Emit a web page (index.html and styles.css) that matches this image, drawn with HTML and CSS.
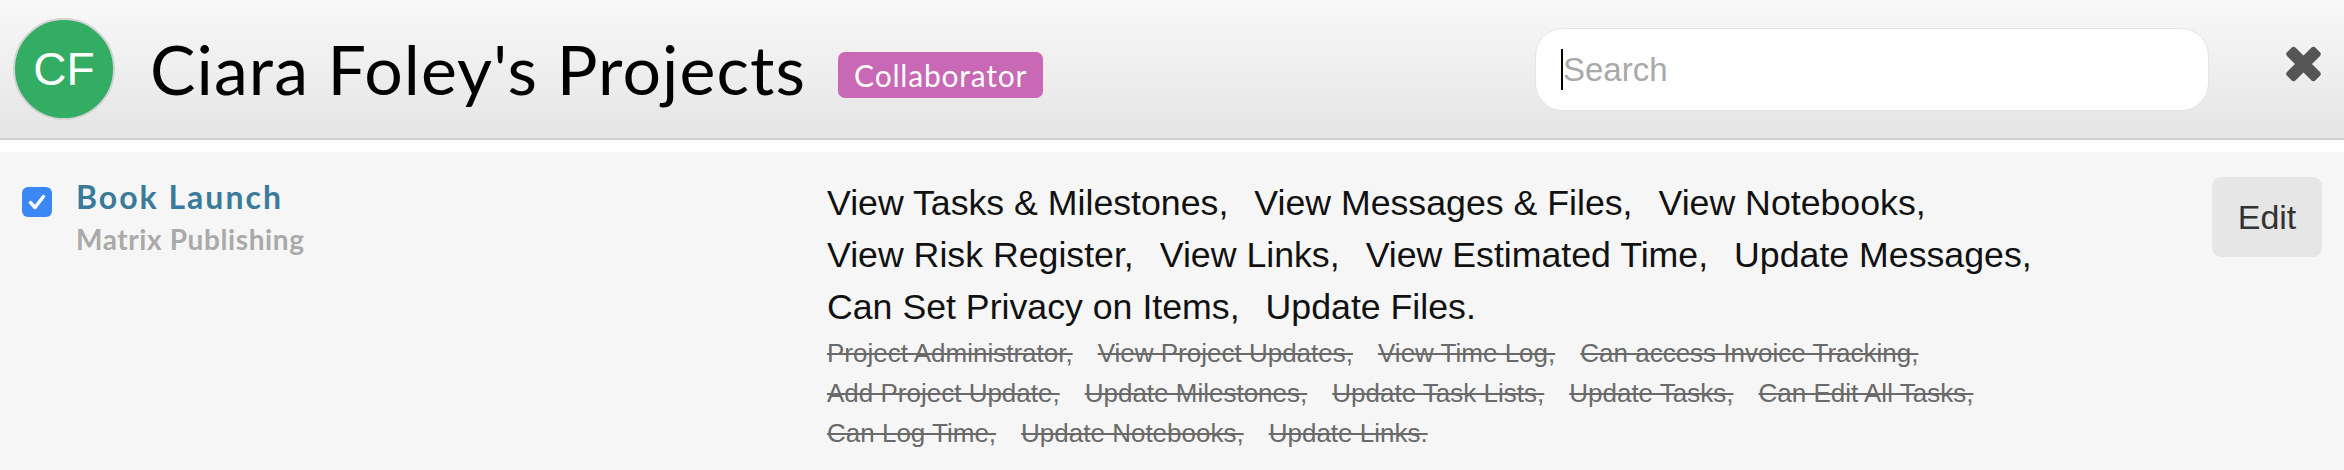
FILE: index.html
```html
<!DOCTYPE html>
<html lang="en">
<head>
<meta charset="utf-8">
<title>Ciara Foley's Projects</title>
<link rel="stylesheet" href="styles.css">
</head>
<body>
<header class="header">
  <div class="avatar">CF</div>
  <h1 class="title">Ciara Foley's Projects</h1>
  <span class="badge">Collaborator</span>
  <div class="search">
    <span class="caret"></span>
    <input class="search-input" type="text" placeholder="Search">
  </div>
  <button class="close" aria-label="Close">
    <svg viewBox="0 0 37 36" width="37" height="36">
      <g fill="#555" transform="translate(18.5 18)">
        <rect x="-20" y="-6" width="40" height="12" rx="3" transform="rotate(45)"/>
        <rect x="-20" y="-6" width="40" height="12" rx="3" transform="rotate(-45)"/>
      </g>
    </svg>
  </button>
</header>

<main class="list">
  <div class="row">
    <div class="project">
      <span class="checkbox">
        <svg viewBox="0 0 30 30" width="30" height="30">
          <path d="M8.5 15.5 L13 20.5 L21.5 9.5" fill="none" stroke="#fff" stroke-width="3.4" stroke-linecap="round" stroke-linejoin="round"/>
        </svg>
      </span>
      <div class="project-text">
        <div class="project-name">Book Launch</div>
        <div class="project-company">Matrix Publishing</div>
      </div>
    </div>
    <div class="perms">
      <div class="perm-list granted">
        <span>View Tasks &amp; Milestones,</span>
        <span>View Messages &amp; Files,</span>
        <span>View Notebooks,</span>
        <span>View Risk Register,</span>
        <span>View Links,</span>
        <span>View Estimated Time,</span>
        <span>Update Messages,</span>
        <span>Can Set Privacy on Items,</span>
        <span>Update Files.</span>
      </div>
      <div class="perm-list denied">
        <span>Project Administrator,</span>
        <span>View Project Updates,</span>
        <span>View Time Log,</span>
        <span>Can access Invoice Tracking,</span>
        <span>Add Project Update,</span>
        <span>Update Milestones,</span>
        <span>Update Task Lists,</span>
        <span>Update Tasks,</span>
        <span>Can Edit All Tasks,</span>
        <span>Can Log Time,</span>
        <span>Update Notebooks,</span>
        <span>Update Links.</span>
      </div>
    </div>
    <button class="edit">Edit</button>
  </div>
</main>
</body>
</html>
```

FILE: styles.css
```css
html, body {
  margin: 0;
  padding: 0;
  overflow: hidden;
  background: #ffffff;
}

body {
  font-family: "Liberation Sans", Arial, sans-serif;
  color: #111;
}

.header {
  display: flex;
  align-items: center;
  height: 138px;
  padding: 0 22px 0 13px;
  background: linear-gradient(#f8f8f8, #e5e5e5);
  border-bottom: 2px solid #cfcfcf;
}

.avatar {
  width: 102px;
  height: 102px;
  box-sizing: border-box;
  border-radius: 50%;
  border: 2px solid #d2d2d2;
  background: #33ad64;
  color: #fff;
  font-family: "Liberation Sans", Arial, sans-serif;
  font-size: 46px;
  display: flex;
  align-items: center;
  justify-content: center;
  flex: none;
}

.title {
  margin: 0 0 0 35px;
  font-family: Lato, "Open Sans", sans-serif;
  font-weight: 400;
  font-size: 68px;
  letter-spacing: 1.1px;
  color: #000;
  line-height: 1;
  white-space: nowrap;
}

.badge {
  margin: 12px 0 0 32px;
  height: 46px;
  box-sizing: border-box;
  padding: 0 16px;
  display: flex;
  align-items: center;
  background: #c968b4;
  color: #fff;
  border-radius: 7px;
  font-family: Lato, "Open Sans", sans-serif;
  font-size: 30px;
  letter-spacing: 0.8px;
}

.search {
  margin-left: auto;
  width: 674px;
  height: 83px;
  box-sizing: border-box;
  border: 1px solid #e6e6e6;
  border-radius: 28px;
  background: #fff;
  display: flex;
  align-items: center;
  padding-left: 25px;
  margin-top: 1px;
}

.caret {
  width: 2px;
  height: 41px;
  background: #000;
  flex: none;
}

.search-input {
  flex: 1;
  min-width: 0;
  border: none;
  outline: none;
  background: transparent;
  padding: 0;
  font-family: "Liberation Sans", Arial, sans-serif;
  font-size: 33px;
  color: #333;
}

.search-input::placeholder {
  color: #a9a9a9;
}

.close {
  margin-left: 76px;
  width: 37px;
  height: 36px;
  padding: 0;
  border: none;
  background: none;
  display: block;
  margin-top: -10px;
}

.close svg {
  display: block;
}

.list {
  margin-top: 12px;
}

.row {
  display: flex;
  align-items: flex-start;
  background: #f6f6f6;
  padding: 25px 22px 40px 22px;
}

.project {
  width: 805px;
  flex: none;
  display: flex;
  align-items: flex-start;
}

.checkbox {
  width: 30px;
  height: 30px;
  border-radius: 6px;
  background: #3b87f6;
  margin-top: 10px;
  flex: none;
}

.checkbox svg {
  display: block;
}

.project-text {
  margin-left: 24px;
  margin-top: 2px;
  font-family: Lato, "Open Sans", sans-serif;
  font-weight: 700;
}

.project-name {
  font-size: 32px;
  letter-spacing: 2px;
  line-height: 36px;
  color: #3a7a9b;
}

.project-company {
  margin-top: 7px;
  font-size: 28px;
  letter-spacing: 0.6px;
  line-height: 34px;
  color: #aaaaaa;
}

.perms {
  width: 1275px;
  flex: none;
}

.perm-list {
  display: flex;
  flex-wrap: wrap;
  column-gap: 26px;
}

.granted {
  font-size: 35.7px;
  line-height: 52px;
  color: #111;
}

.denied {
  font-size: 26px;
  line-height: 40px;
  color: #6a6a6a;
  text-decoration: line-through;
  column-gap: 25px;
}

.edit {
  margin-left: auto;
  width: 110px;
  height: 80px;
  border: none;
  border-radius: 9px;
  background: #e6e6e6;
  color: #333;
  font-family: "Liberation Sans", Arial, sans-serif;
  font-size: 34px;
  padding: 0;
}
```
